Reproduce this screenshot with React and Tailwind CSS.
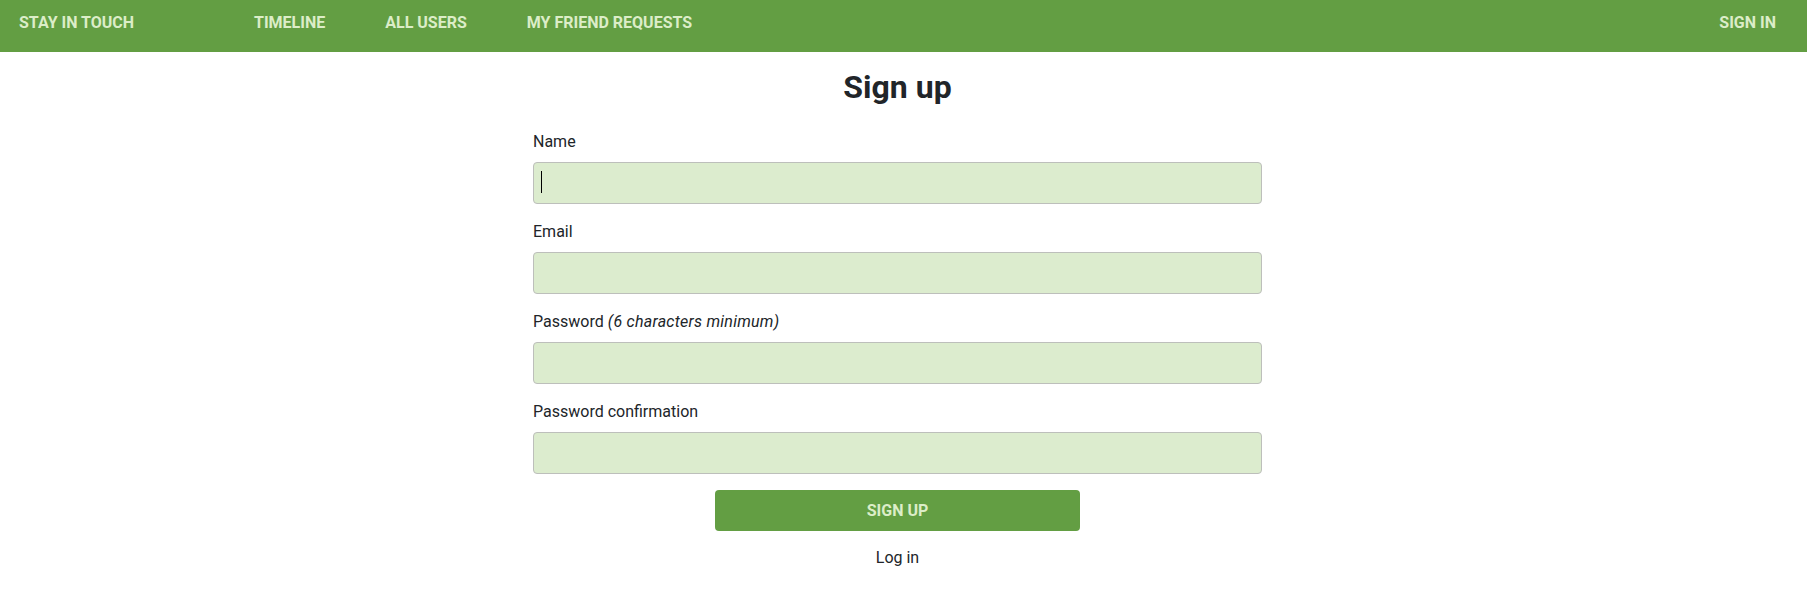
import React from "react";

function Field({ label, hint, caret }) {
  return (
    <div className="mb-[16px]">
      <label className="block mb-2 text-[16px] leading-6 text-[#212529]">
        {label}
        {hint && <em className="italic tracking-[0.25px]"> {hint}</em>}
      </label>
      <div className="relative">
        <input
          type="text"
          className="block w-full h-[42px] rounded-[4px] border border-[#bdbfbb] bg-[#dcecce] px-3 outline-none"
        />
        {caret && (
          <span className="absolute left-[8px] top-[9px] w-px h-[22px] bg-black" />
        )}
      </div>
    </div>
  );
}

export default function App() {
  return (
    <div
      className="min-h-[595px] bg-white text-[#212529]"
      style={{ fontFamily: "Roboto, 'Liberation Sans', sans-serif" }}
    >
      <nav className="h-[52px] bg-[#639e43] flex items-start pt-[11px] text-[16px] leading-6 font-bold text-[#dcedc8]">
        <a className="pl-[19px] w-[254px]">STAY IN TOUCH</a>
        <div className="flex gap-[60px]">
          <a>TIMELINE</a>
          <a>ALL USERS</a>
          <a>MY FRIEND REQUESTS</a>
        </div>
        <a className="ml-auto pr-[31px]">SIGN IN</a>
      </nav>
      <main className="flex justify-center pr-[12px]">
        <div className="w-[729px]">
          <h1 className="mt-[16px] mb-[24px] text-center text-[32px] leading-[38px] font-bold text-[#212529]">
            Sign up
          </h1>
          <Field label="Name" caret />
          <Field label="Email" />
          <Field label="Password" hint="(6 characters minimum)" />
          <Field label="Password confirmation" />
          <button className="block mx-auto mt-[1px] w-[365px] h-[41px] rounded-[4px] bg-[#639e43] text-[#dcedc8] text-[16px] font-bold">
            SIGN UP
          </button>
          <div className="mt-[15px] text-center text-[16px] leading-6 text-[#212529]">
            Log in
          </div>
        </div>
      </main>
    </div>
  );
}
